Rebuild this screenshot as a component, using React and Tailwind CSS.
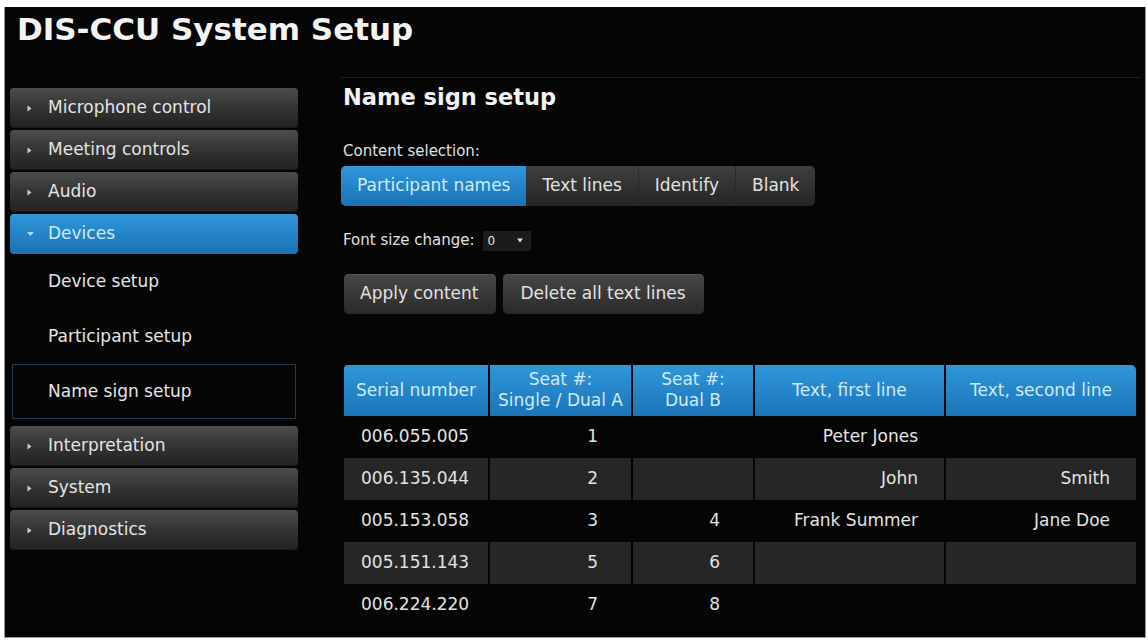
import React from "react";

const Tri = ({ down }) =>
  down ? (
    <svg width="7" height="5" viewBox="0 0 7 5" className="shrink-0">
      <path d="M0 0 L7 0 L3.5 4 Z" fill="#b9d9ef" />
    </svg>
  ) : (
    <svg width="5" height="7" viewBox="0 0 5 7" className="shrink-0">
      <path d="M0.5 0.5 L4.5 3.5 L0.5 6.5 Z" fill="#cfcfcf" />
    </svg>
  );

const MenuItem = ({ label, active }) => (
  <div
    className={
      "h-[40px] rounded-[4px] flex items-center pl-[17px] text-[17px] " +
      (active
        ? "bg-linear-to-b from-[#2f97d9] to-[#1a72b6] text-[#cdeaf9]"
        : "bg-linear-to-b from-[#4d4d4d] via-[#333333] to-[#222222] text-[#e4e4e4] shadow-[inset_0_-1px_0_#181818]")
    }
  >
    <Tri down={active} />
    <span className={active ? "ml-[14px]" : "ml-[16px]"}>{label}</span>
  </div>
);

const SubItem = ({ label, selected }) => (
  <div
    className={
      "h-[55px] flex items-center text-[17px] text-[#e4e4e4] " +
      (selected ? "border border-[#1d3b52] mx-[2px] pl-[35px]" : "pl-[38px]")
    }
  >
    {label}
  </div>
);

const rows = [
  ["006.055.005", "1", "", "Peter Jones", ""],
  ["006.135.044", "2", "", "John", "Smith"],
  ["005.153.058", "3", "4", "Frank Summer", "Jane Doe"],
  ["005.151.143", "5", "6", "", ""],
  ["006.224.220", "7", "8", "", ""],
];

export default function App() {
  return (
    <div className="w-[1148px] h-[642px] bg-white pt-[7px] pl-[4px] pr-[2px] pb-[4px]">
      <div className="h-full bg-[#050505] border-r border-b border-l border-[#9a9a9a] font-['DejaVu_Sans',sans-serif] text-[#e6e6e6] overflow-hidden">
        <div className="h-[70px] pl-[12px] pt-[7px]">
          <h1 className="text-[31px] font-bold leading-none text-[#f4f4f4]">
            DIS-CCU System Setup
          </h1>
        </div>
        <div className="flex">
          <div className="w-[288px] ml-[5px] pt-[11px] flex flex-col">
            <div className="flex flex-col gap-[2px]">
              <MenuItem label="Microphone control" />
              <MenuItem label="Meeting controls" />
              <MenuItem label="Audio" />
              <MenuItem label="Devices" active />
            </div>
            <SubItem label="Device setup" />
            <SubItem label="Participant setup" />
            <SubItem label="Name sign setup" selected />
            <div className="flex flex-col gap-[2px] mt-[7px]">
              <MenuItem label="Interpretation" />
              <MenuItem label="System" />
              <MenuItem label="Diagnostics" />
            </div>
          </div>
          <div className="ml-[43px] w-[800px] border-t border-[#1f1f1f]">
            <h2 className="mt-[8px] pl-[2px] text-[22.5px] font-bold leading-none text-[#f2f2f2]">
              Name sign setup
            </h2>
            <div className="mt-[35px] pl-[2px] text-[15px] leading-none text-[#e0e0e0]">
              Content selection:
            </div>
            <div className="mt-[7px] flex h-[40px] w-fit rounded-[5px] bg-linear-to-b from-[#3e3e3e] to-[#262626] text-[17px] overflow-hidden">
              <div className="flex items-center px-[16px] bg-linear-to-b from-[#2f97d9] to-[#1a72b6] text-[#cdeaf9]">
                Participant names
              </div>
              <div className="flex items-center px-[16px] text-[#e2e2e2] border-r border-[#2a2a2a]">
                Text lines
              </div>
              <div className="flex items-center px-[16px] text-[#e2e2e2] border-r border-[#2a2a2a]">
                Identify
              </div>
              <div className="flex items-center px-[16px] text-[#e2e2e2]">
                Blank
              </div>
            </div>
            <div className="mt-[25px] flex items-center h-[20px]">
              <span className="pl-[2px] text-[15px] leading-none text-[#e0e0e0]">
                Font size change:
              </span>
              <div className="ml-[8px] h-[20px] w-[48px] bg-[#1b1b1b] flex items-center pl-[5px] pr-[8px] text-[12px] text-[#e0e0e0]">
                <span>0</span>
                <svg width="6" height="5" viewBox="0 0 6 5" className="ml-auto">
                  <path d="M0 0.5 L6 0.5 L3 4.5 Z" fill="#e0e0e0" />
                </svg>
              </div>
            </div>
            <div className="mt-[23px] flex gap-[7px] ml-[3px]">
              <button className="h-[40px] rounded-[5px] pl-[16px] pr-[17px] bg-linear-to-b from-[#474747] to-[#2a2a2a] text-[17px] text-[#e2e2e2] shadow-[inset_0_1px_0_#555]">
                Apply content
              </button>
              <button className="h-[40px] rounded-[5px] px-[18px] bg-linear-to-b from-[#474747] to-[#2a2a2a] text-[17px] text-[#e2e2e2] shadow-[inset_0_1px_0_#555]">
                Delete all text lines
              </button>
            </div>
            <div className="mt-[51px] ml-[3px] grid grid-cols-[144px_141px_120px_189px_190px] gap-x-[2px] text-[17px]">
              {[
                ["Serial number"],
                ["Seat #:", "Single / Dual A"],
                ["Seat #:", "Dual B"],
                ["Text, first line"],
                ["Text, second line"],
              ].map((h, i) => (
                <div
                  key={i}
                  className={
                    "h-[51px] flex flex-col items-center justify-center leading-[21px] text-center bg-linear-to-b from-[#2f97d9] to-[#1b74b8] text-[#cfeafa] " +
                    (i === 0 ? "rounded-tl-[4px]" : "") +
                    (i === 4 ? "rounded-tr-[5px]" : "")
                  }
                >
                  {h.map((t, j) => (
                    <div key={j}>{t}</div>
                  ))}
                </div>
              ))}
              {rows.map((r, ri) =>
                r.map((c, ci) => (
                  <div
                    key={ri + "-" + ci}
                    className={
                      "h-[42px] flex items-center text-[#e2e2e2] " +
                      (ri % 2 === 1 ? "bg-[#262626] " : "") +
                      (ci === 0
                        ? "pl-[17px]"
                        : ci < 3
                        ? "justify-end pr-[33px]"
                        : "justify-end pr-[26px]")
                    }
                  >
                    {c}
                  </div>
                ))
              )}
            </div>
          </div>
        </div>
      </div>
    </div>
  );
}
